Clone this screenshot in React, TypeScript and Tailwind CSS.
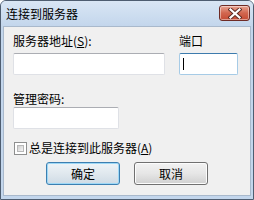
import React from "react";

const font = { fontFamily: '"Noto Sans CJK SC", "Microsoft YaHei", sans-serif' };

function CloseButton() {
  return (
    <div className="w-[31px] h-[16px] rounded-[3px] border border-[#6e2b25] bg-gradient-to-b from-[#e8a493] via-[#d2664f] to-[#c44a33] flex items-center justify-center shadow-[inset_0_0_0_1px_rgba(255,255,255,0.45)]">
      <svg width="14" height="11" viewBox="0 0 14 11">
        <path
          d="M2.5 1.5 L11.5 9.5 M11.5 1.5 L2.5 9.5"
          stroke="#5a2a22"
          strokeWidth="4"
          strokeLinecap="square"
        />
        <path
          d="M2.5 1.5 L11.5 9.5 M11.5 1.5 L2.5 9.5"
          stroke="#ffffff"
          strokeWidth="2.2"
          strokeLinecap="square"
        />
      </svg>
    </div>
  );
}

function TextBox({ width, focused }: { width: number; focused?: boolean }) {
  return (
    <div
      className={
        focused
          ? "h-[22px] rounded-[2px] border border-[#a6cbe6] border-t-[#3d7bad] bg-white flex items-center pl-[3px]"
          : "h-[22px] rounded-[2px] border border-[#dfe1e6] border-t-[#abadb3] bg-white"
      }
      style={{ width }}
    >
      {focused && <div className="w-px h-[12px] bg-black" />}
    </div>
  );
}

function Button({ label, primary }: { label: string; primary?: boolean }) {
  return (
    <div
      className={
        primary
          ? "w-[74px] h-[23px] rounded-[3px] border border-[#3c7fb1] bg-gradient-to-b from-[#eef4f8] via-[#e0e8ee] to-[#cfdbe5] shadow-[inset_0_0_0_1px_#9ed8f6] flex items-center justify-center text-[12px] text-black"
          : "w-[74px] h-[23px] rounded-[3px] border border-[#707070] bg-gradient-to-b from-[#f2f2f2] via-[#e6e6e6] to-[#d0d0d0] shadow-[inset_0_0_0_1px_#fcfcfc] flex items-center justify-center text-[12px] text-black"
      }
    >
      {label}
    </div>
  );
}

export default function App() {
  return (
    <div
      className="w-[254px] h-[200px] border border-[#4e5d70] rounded-t-[6px] bg-[#c3d6ec] flex flex-col"
      style={font}
    >
      {/* Title bar */}
      <div className="h-[25px] flex items-center justify-between pl-[5px] pr-[3px] rounded-t-[5px] bg-gradient-to-b from-[#d9e6f4] to-[#c3d6ec]">
        <span className="text-[12px] leading-[16px] text-black mt-[1px]">连接到服务器</span>
        <div className="self-start mt-[4px]">
          <CloseButton />
        </div>
      </div>

      {/* Client area */}
      <div className="flex-1 mx-[2px] mb-[3px] border border-[#a9b9cc] bg-[#f0f0f0] flex flex-col pl-[9px] text-[12px] text-black">
        <div className="flex gap-[14px] mt-[6px]">
          <div className="flex flex-col">
            <span className="leading-[16px] h-[16px] mb-[4px]">
              服务器地址(<span className="underline">S</span>):
            </span>
            <TextBox width={152} />
          </div>
          <div className="flex flex-col">
            <span className="leading-[16px] h-[16px] mb-[4px]">端口</span>
            <TextBox width={59} focused />
          </div>
        </div>

        <div className="flex flex-col mt-[16px]">
          <span className="leading-[16px] h-[16px]">管理密码:</span>
          <TextBox width={106} />
        </div>

        <label className="flex items-center mt-[11px] h-[16px]">
          <span className="w-[13px] h-[13px] border border-[#8e8f8f] bg-white p-[2px] ml-[1px] mr-[2px]">
            <span className="block w-full h-full border border-[#b8b8b8] bg-gradient-to-br from-[#cfcfcf] to-[#f6f6f6]" />
          </span>
          <span className="leading-[16px]">
            总是连接到此服务器(<span className="underline">A</span>)
          </span>
        </label>

        <div className="flex justify-center gap-[14px] mt-[6px] mr-[9px]">
          <Button label="确定" primary />
          <Button label="取消" />
        </div>
      </div>
    </div>
  );
}
